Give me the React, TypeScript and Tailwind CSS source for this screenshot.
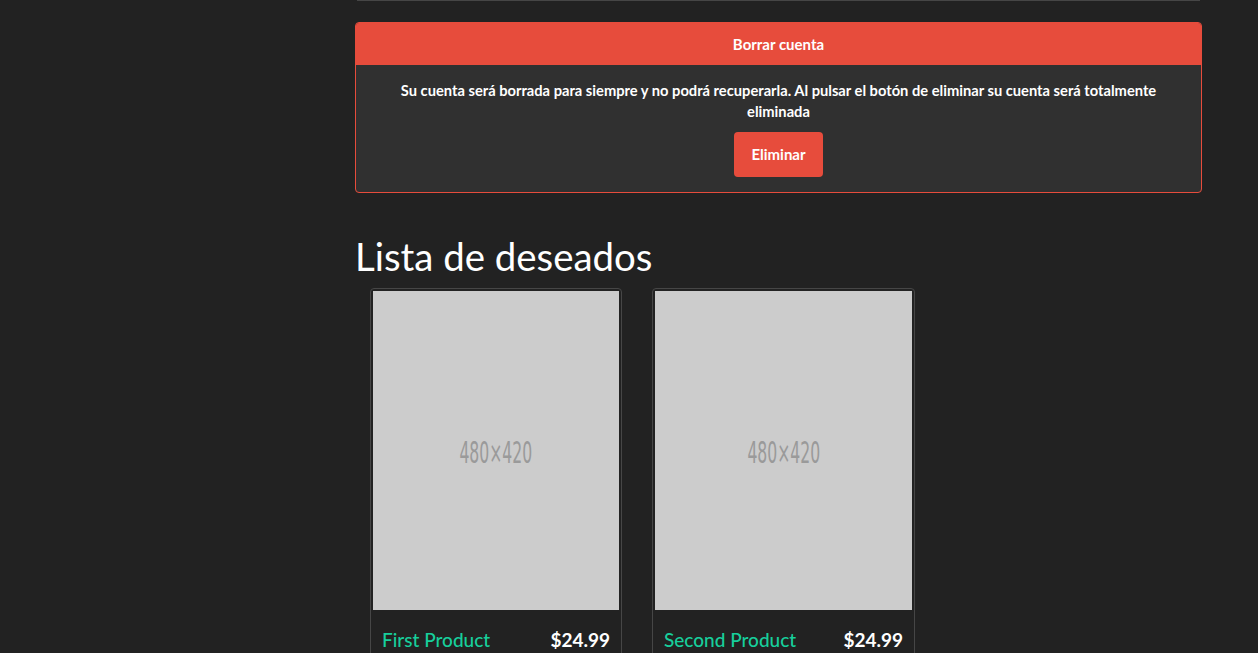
import React from 'react';

const products = [
    { name: 'First Product', price: '$24.99', w: 'w-[252px]' },
    { name: 'Second Product', price: '$24.99', w: 'w-[263px]' },
];

export default function App() {
    return (
        <div className="min-h-[653px] bg-[#222222] text-white font-['Lato','Liberation_Sans',sans-serif] overflow-hidden">
            <div className="ml-[355px] w-[847px]">
                <div className="mx-[2px] h-px bg-[#464646]"></div>

                {/* delete account panel */}
                <div className="mt-[21px] rounded border border-[#e74c3c] bg-[#303030] overflow-hidden">
                    <div className="h-[42px] bg-[#e74c3c] flex items-center justify-center text-[15px] font-bold">
                        Borrar cuenta
                    </div>
                    <div className="px-5 pt-[15px] pb-[15px] text-center">
                        <p className="text-[14.7px] leading-[21px] font-bold">
                            Su cuenta será borrada para siempre y no podrá recuperarla. Al pulsar el botón de eliminar su cuenta será totalmente eliminada
                        </p>
                        <button className="mt-[10px] h-[45px] w-[89px] rounded bg-[#e74c3c] text-[15px] font-bold text-white">
                            Eliminar
                        </button>
                    </div>
                </div>

                <h1 className="mt-[42px] text-[38.4px] leading-[43px] font-normal">Lista de deseados</h1>

                <div className="mt-[10px] flex gap-[30px] px-[15px]">
                    {products.map((p) => (
                        <div key={p.name} className={`${p.w} rounded border border-[#464646] p-[2px] pb-0`}>
                            <div className="h-[319px] bg-[#cccccc] flex items-center justify-center pt-[4px]">
                                <span className="inline-block text-[#9a9a9a] text-[30px] font-normal scale-x-[0.58] font-['DejaVu_Sans_Condensed','Liberation_Sans',sans-serif]">
                                    480×420
                                </span>
                            </div>
                            <div className="flex items-center justify-between px-[9px] pt-[17px] pb-2 text-[19px] leading-[26px]">
                                <span className="text-[#17cf9c] font-medium">{p.name}</span>
                                <span className="font-bold">{p.price}</span>
                            </div>
                        </div>
                    ))}
                </div>
            </div>
        </div>
    );
}
